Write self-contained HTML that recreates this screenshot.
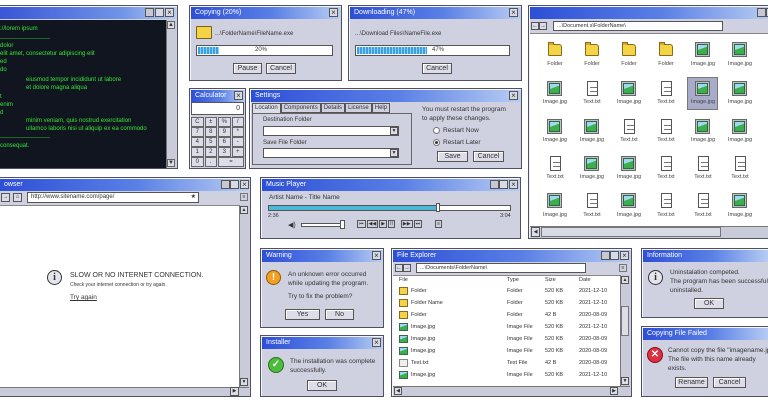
<!DOCTYPE html>
<html><head><meta charset="utf-8"><style>
*{box-sizing:border-box;margin:0;padding:0}
body{width:768px;height:401px;background:#fff;position:relative;overflow:hidden;font-family:"Liberation Sans",sans-serif;font-size:7px;color:#333}
.a{position:absolute}
.w{position:absolute;background:#cfd1e0;border:1px solid #4e5066;box-shadow:inset 1px 1px #f4f4fa}
.t{position:absolute;left:1px;right:1px;top:1px;height:12px;background:linear-gradient(90deg,#2d4fd6,#5a80e6 55%,#b8cdf3);color:#fff;font-size:7px;line-height:12px;padding-left:4px}
.cb{position:absolute;top:2px;width:9px;height:9px;background:#d8dae6;border:1px solid #555;color:#333;font-size:8px;line-height:7px;text-align:center}
.btn{position:absolute;background:#dcdde8;border:1px solid #555;box-shadow:inset 1px 1px #fff;text-align:center;font-size:7px;line-height:10px;height:11px}
.in{position:absolute;background:#fff;border:1px solid #555}
.g{color:#34e634;position:absolute;font-size:6px;white-space:nowrap;font-family:"Liberation Sans",sans-serif}
.ic{position:absolute;width:16px;height:15px}
.lb{position:absolute;width:36px;text-align:center;font-size:5.5px;color:#444}
.sel{position:absolute;background:#a8acc8;border:1px solid #777}
.row{position:absolute;font-size:5.5px;color:#333;white-space:nowrap}
.k{height:9.5px;background:#dcdde8;border:1px solid #666;text-align:center;line-height:8px;margin-bottom:.5px}
</style></head><body>

<!-- Terminal -->
<div class="w" style="left:-2px;top:5px;width:180px;height:164px;">
 <div class="t" style="background:linear-gradient(90deg,#3856d6,#7095e8 70%,#b8cdf3)"></div>
 <div class="cb" style="left:146px;background:#c8c8d4"></div><div class="cb" style="left:156px"></div><div class="cb" style="left:166px">×</div>
 <div class="a" style="left:1px;top:14px;width:166px;height:148px;background:#111520"></div>
 <div class="a" style="left:167px;top:14px;width:10px;height:148px;background:#c9cbd8;border-left:1px solid #777"></div>
 <div class="a" style="left:168px;top:15px;width:8px;height:8px;background:#dcdde6;border:1px solid #666;font-size:6px;line-height:6px;text-align:center">▲</div>
 <div class="a" style="left:168px;top:153px;width:8px;height:8px;background:#dcdde6;border:1px solid #666;font-size:6px;line-height:6px;text-align:center">▼</div>
</div>
<div class="a" style="left:0;top:20px;width:165px;height:145px;overflow:hidden">
<div class="g" style="left:0;top:6px">://lorem ipsum</div>
<div class="g" style="left:0;top:16px">-------------------------</div>
<div class="g" style="left:0;top:23px">dolor</div>
<div class="g" style="left:0;top:31px">elit amet, consectetur adipiscing elit</div>
<div class="g" style="left:0;top:39px">ed</div>
<div class="g" style="left:0;top:47px">do</div>
<div class="g" style="left:26px;top:57px">eiusmod tempor incididunt ut labore</div>
<div class="g" style="left:26px;top:65px">et dolore magna aliqua</div>
<div class="g" style="left:0;top:74px">t</div>
<div class="g" style="left:0;top:82px">enim</div>
<div class="g" style="left:0;top:90px">d</div>
<div class="g" style="left:26px;top:98px">minim veniam, quis nostrud exercitation</div>
<div class="g" style="left:26px;top:106px">ullamco laboris nisi ut aliquip ex ea commodo</div>
<div class="g" style="left:0;top:115px">-------------------------</div>
<div class="g" style="left:0;top:123px">consequat.</div>
</div>

<!-- Copying -->
<div class="w" style="left:189px;top:5px;width:153px;height:76px;">
 <div class="t">Copying (20%)</div><div class="cb" style="left:139px">×</div>
</div>
<div class="a" style="left:196px;top:26px;width:16px;height:13px;background:#f3d444;border:1px solid #7a6020;border-radius:1px"></div>
<div class="a" style="left:215px;top:31px;font-size:6px">...\FolderName\FileName.exe</div>
<div class="in" style="left:196px;top:45px;width:137px;height:11px"></div>
<div class="a" style="left:198px;top:47px;width:21px;height:7px;background:repeating-linear-gradient(90deg,#3aa0e0 0 2px,#8fd0f4 2px 3px)"></div>
<div class="a" style="left:255px;top:47px;font-size:6px">20%</div>
<div class="btn" style="left:233px;top:63px;width:29px">Pause</div>
<div class="btn" style="left:266px;top:63px;width:30px">Cancel</div>

<!-- Downloading -->
<div class="w" style="left:348px;top:5px;width:174px;height:76px;">
 <div class="t">Downloading (47%)</div><div class="cb" style="left:160px">×</div>
</div>
<div class="a" style="left:355px;top:31px;font-size:6px">...\Download Files\NameFile.exe</div>
<div class="in" style="left:355px;top:45px;width:155px;height:11px"></div>
<div class="a" style="left:357px;top:47px;width:70px;height:7px;background:repeating-linear-gradient(90deg,#3aa0e0 0 2px,#8fd0f4 2px 3px)"></div>
<div class="a" style="left:432px;top:47px;font-size:6px">47%</div>
<div class="btn" style="left:422px;top:63px;width:30px">Cancel</div>

<!-- Calculator -->
<div class="w" style="left:189px;top:88px;width:57px;height:81px;">
 <div class="t">Calculator</div><div class="cb" style="left:44px">×</div>
</div>
<div class="in" style="left:191px;top:102px;width:53px;height:13px;text-align:right;padding-right:3px;font-size:7px;line-height:11px">0</div>
<div class="a" style="left:191px;top:117px;width:53px;font-size:6px">
<div style="display:grid;grid-template-columns:repeat(4,12.5px);gap:0 1px;">
<div class="k">C</div><div class="k">±</div><div class="k">%</div><div class="k">/</div>
<div class="k">7</div><div class="k">8</div><div class="k">9</div><div class="k">*</div>
<div class="k">4</div><div class="k">5</div><div class="k">6</div><div class="k">-</div>
<div class="k">1</div><div class="k">2</div><div class="k">3</div><div class="k">+</div>
<div class="k">0</div><div class="k">.</div><div class="k" style="grid-column:span 2">=</div>
</div></div>

<!-- Settings -->
<div class="w" style="left:249px;top:88px;width:273px;height:81px;">
 <div class="t">Settings</div><div class="cb" style="left:259px">×</div>
</div>
<div class="a" style="left:252px;top:103px;font-size:6px;display:flex">
 <div style="border:1px solid #555;border-bottom:none;padding:1px 2px;background:#dcdde8">Location</div>
 <div style="border:1px solid #555;padding:1px 2px">Components</div>
 <div style="border:1px solid #555;padding:1px 2px">Details</div>
 <div style="border:1px solid #555;padding:1px 2px">License</div>
 <div style="border:1px solid #555;padding:1px 2px">Help</div>
</div>
<div class="a" style="left:252px;top:113px;width:160px;height:52px;border:1px solid #666"></div>
<div class="a" style="left:263px;top:117px;font-size:6px">Destination Folder</div>
<div class="in" style="left:263px;top:126px;width:136px;height:10px"></div>
<div class="a" style="left:390px;top:127px;width:8px;height:8px;background:#dcdde8;border:1px solid #555;font-size:5px;text-align:center;line-height:7px">▼</div>
<div class="a" style="left:263px;top:140px;font-size:6px">Save File Folder</div>
<div class="in" style="left:263px;top:148px;width:136px;height:10px"></div>
<div class="a" style="left:390px;top:149px;width:8px;height:8px;background:#dcdde8;border:1px solid #555;font-size:5px;text-align:center;line-height:7px">▼</div>
<div class="a" style="left:422px;top:105px;font-size:6.5px;line-height:9px">You must restart the program<br>to apply these changes.</div>
<div class="a" style="left:433px;top:127px;width:7px;height:7px;border-radius:50%;background:#fff;border:1px solid #777"></div>
<div class="a" style="left:443px;top:127px;font-size:6.5px">Restart Now</div>
<div class="a" style="left:433px;top:139px;width:7px;height:7px;border-radius:50%;background:#fff;border:1px solid #777"><div style="width:3px;height:3px;background:#333;border-radius:50%;margin:1px"></div></div>
<div class="a" style="left:443px;top:139px;font-size:6.5px">Restart Later</div>
<div class="btn" style="left:437px;top:151px;width:31px">Save</div>
<div class="btn" style="left:473px;top:151px;width:31px">Cancel</div>

<!-- Folder window -->
<div class="w" style="left:528px;top:5px;width:245px;height:234px;">
 <div class="t"></div>
 <div class="cb" style="left:228px;background:#c8c8d4"></div><div class="cb" style="left:237px"></div>
 <div class="a" style="left:2px;top:16px;width:8px;height:8px;background:#dcdde8;border:1px solid #555;font-size:6px;line-height:6px;text-align:center">←</div>
 <div class="a" style="left:10px;top:16px;width:8px;height:8px;background:#dcdde8;border:1px solid #555;font-size:6px;line-height:6px;text-align:center">→</div>
 <div class="in" style="left:24px;top:15px;width:170px;height:10px;font-size:5.5px;line-height:8px;padding-left:3px">...\Document.s\FolderName\</div>
 <div class="a" style="left:1px;top:27px;width:243px;height:193px;background:#fff;border-top:1px solid #888"></div>
 <div class="a" style="left:1px;top:220px;width:243px;height:12px;background:#c9cbd8;border-top:1px solid #777"></div>
 <div class="a" style="left:2px;top:221px;width:9px;height:10px;background:#dcdde6;border:1px solid #555;font-size:5px;line-height:8px;text-align:center">◀</div>
 <div class="a" style="left:12px;top:221px;width:180px;height:10px;background:#d8dae4;border:1px solid #777"></div>
</div>
<div class="sel" style="left:687px;top:77px;width:31px;height:33px"></div>
<div id="grid"></div>

<!-- Browser -->
<div class="w" style="left:-2px;top:177px;width:253px;height:220px;">
 <div class="t">owser</div>
 <div class="cb" style="left:222px;background:#c8c8d4"></div><div class="cb" style="left:231px"></div><div class="cb" style="left:241px">×</div>
 <div class="a" style="left:2px;top:15px;width:9px;height:9px;background:#dcdde8;border:1px solid #555;font-size:6px;line-height:7px;text-align:center">→</div>
 <div class="a" style="left:14px;top:15px;width:9px;height:9px;background:#dcdde8;border:1px solid #555;font-size:6px;line-height:7px;text-align:center">⌂</div>
 <div class="in" style="left:28px;top:14px;width:172px;height:11px;font-size:6px;line-height:9px;padding-left:3px">http://www.sitename.com/page/<span style="position:absolute;right:2px;top:0">★</span></div>
 <div class="a" style="left:241px;top:15px;width:8px;height:8px;border:1px solid #777;font-size:5px;line-height:6px;text-align:center">≡</div>
 <div class="a" style="left:1px;top:27px;width:241px;height:182px;background:#fff;border-top:1px solid #888"></div>
 <div class="a" style="left:240px;top:27px;width:10px;height:182px;background:#c9cbd8;border-left:1px solid #777"></div>
 <div class="a" style="left:241px;top:28px;width:8px;height:8px;background:#dcdde6;border:1px solid #555;font-size:5px;line-height:6px;text-align:center">▲</div>
 <div class="a" style="left:241px;top:200px;width:8px;height:8px;background:#dcdde6;border:1px solid #555;font-size:5px;line-height:6px;text-align:center">▼</div>
 <div class="a" style="left:1px;top:209px;width:249px;height:9px;background:#c9cbd8;border-top:1px solid #777"></div>
 <div class="a" style="left:231px;top:209px;width:9px;height:9px;background:#dcdde6;border:1px solid #555;font-size:5px;line-height:7px;text-align:center">▶</div>
</div>
<div class="a" style="left:47px;top:270px;width:15px;height:15px;border-radius:50%;background:#e4e4ec;border:1px solid #333;text-align:center;font:bold 10px/13px 'Liberation Serif',serif">i</div>
<div class="a" style="left:70px;top:272px;font-size:7px;white-space:nowrap">SLOW OR NO INTERNET CONNECTION.</div>
<div class="a" style="left:70px;top:282px;font-size:5px;white-space:nowrap">Check your internet connection or try again.</div>
<div class="a" style="left:70px;top:294px;font-size:6.5px;text-decoration:underline">Try again</div>

<!-- Music player -->
<div class="w" style="left:260px;top:177px;width:261px;height:62px;">
 <div class="t">Music Player</div>
 <div class="cb" style="left:229px;background:#c8c8d4"></div><div class="cb" style="left:238px"></div><div class="cb" style="left:248px">×</div>
</div>
<div class="a" style="left:269px;top:194px;font-size:6.5px">Artist Name - Title Name</div>
<div class="in" style="left:268px;top:205px;width:243px;height:6px;"></div>
<div class="a" style="left:269px;top:206px;width:168px;height:4px;background:#4cb8d8"></div>
<div class="a" style="left:436px;top:203px;width:4px;height:9px;background:#fff;border:1px solid #555"></div>
<div class="a" style="left:268px;top:213px;font-size:5.5px">2:36</div>
<div class="a" style="left:500px;top:213px;font-size:5.5px">3:04</div>
<div class="a" style="left:288px;top:221px;font-size:7px">◀)</div>
<div class="a" style="left:301px;top:223px;width:43px;height:4px;background:#fff;border:1px solid #555"></div>
<div class="a" style="left:340px;top:220px;width:5px;height:9px;background:#fff;border:1px solid #555"></div>
<div class="a" style="left:357px;top:220px;font-size:5px;display:flex;gap:1px">
 <span style="border:1px solid #555;padding:0 1px">⏮</span><span style="border:1px solid #555;padding:0 1px">◀◀</span><span style="border:1px solid #555;padding:0 1px">▶</span><span style="border:1px solid #555;padding:0 1px">II</span><span style="margin-left:5px;border:1px solid #555;padding:0 1px">▶▶</span><span style="border:1px solid #555;padding:0 1px">⏭</span><span style="margin-left:12px;border:1px solid #555;padding:0 1px">≡</span>
</div>

<!-- Warning -->
<div class="w" style="left:260px;top:248px;width:124px;height:80px;">
 <div class="t">Warning</div><div class="cb" style="left:111px">×</div>
</div>
<div class="a" style="left:266px;top:270px;width:15px;height:15px;border-radius:50%;background:#f2a020;border:1px solid #8a5a10;color:#fff;text-align:center;font:bold 10px/13px sans-serif">!</div>
<div class="a" style="left:288px;top:270px;font-size:6.5px;line-height:9px">An unknown error occurred<br>while updating the program.</div>
<div class="a" style="left:288px;top:293px;font-size:6.5px">Try to fix the problem?</div>
<div class="btn" style="left:285px;top:309px;width:35px">Yes</div>
<div class="btn" style="left:325px;top:309px;width:29px">No</div>

<!-- Installer -->
<div class="w" style="left:260px;top:335px;width:124px;height:62px;">
 <div class="t">Installer</div><div class="cb" style="left:111px">×</div>
</div>
<div class="a" style="left:268px;top:357px;width:16px;height:16px;border-radius:50%;background:#4cbc3c;border:1px solid #2a7020;color:#fff;text-align:center;font:bold 10px/14px sans-serif">✓</div>
<div class="a" style="left:290px;top:357px;font-size:6.5px;line-height:9px">The installation was complete<br>successfully.</div>
<div class="btn" style="left:307px;top:380px;width:30px">OK</div>

<!-- File Explorer -->
<div class="w" style="left:391px;top:248px;width:241px;height:149px;">
 <div class="t">File Explorer</div>
 <div class="cb" style="left:209px;background:#c8c8d4"></div><div class="cb" style="left:218px"></div><div class="cb" style="left:228px">×</div>
 <div class="a" style="left:3px;top:15px;width:8px;height:8px;background:#dcdde8;border:1px solid #555;font-size:6px;line-height:6px;text-align:center">←</div>
 <div class="a" style="left:11px;top:15px;width:8px;height:8px;background:#dcdde8;border:1px solid #555;font-size:6px;line-height:6px;text-align:center">→</div>
 <div class="in" style="left:24px;top:14px;width:170px;height:10px;font-size:5.5px;line-height:8px;padding-left:3px">...\Documents\FolderName\</div>
 <div class="a" style="left:227px;top:15px;width:8px;height:8px;border:1px solid #777;font-size:5px;line-height:6px;text-align:center">≡</div>
 <div class="a" style="left:1px;top:26px;width:237px;height:111px;background:#fff;border-top:1px solid #888"></div>
 <div class="a" style="left:228px;top:26px;width:10px;height:111px;background:#c9cbd8;border-left:1px solid #777"></div>
 <div class="a" style="left:229px;top:27px;width:8px;height:8px;background:#dcdde6;border:1px solid #555;font-size:5px;line-height:6px;text-align:center">▲</div>
 <div class="a" style="left:229px;top:57px;width:8px;height:30px;background:#dcdde6;border:1px solid #777"></div>
 <div class="a" style="left:229px;top:128px;width:8px;height:8px;background:#dcdde6;border:1px solid #555;font-size:5px;line-height:6px;text-align:center">▼</div>
 <div class="a" style="left:1px;top:137px;width:237px;height:10px;background:#c9cbd8;border-top:1px solid #777"></div>
 <div class="a" style="left:2px;top:138px;width:8px;height:8px;background:#dcdde6;border:1px solid #555;font-size:5px;line-height:6px;text-align:center">◀</div>
 <div class="a" style="left:218px;top:138px;width:8px;height:8px;background:#dcdde6;border:1px solid #555;font-size:5px;line-height:6px;text-align:center">▶</div>
</div>
<div id="rows"></div>

<!-- Information -->
<div class="w" style="left:641px;top:248px;width:130px;height:70px;">
 <div class="t">Information</div>
</div>
<div class="a" style="left:648px;top:270px;width:15px;height:15px;border-radius:50%;background:#e4e4ec;border:1px solid #333;text-align:center;font:bold 10px/13px 'Liberation Serif',serif">i</div>
<div class="a" style="left:670px;top:268px;font-size:6.5px;line-height:9px;white-space:nowrap">Uninstalation competed.<br>The program has been successfully<br>uninstalled.</div>
<div class="btn" style="left:694px;top:298px;width:30px">OK</div>

<!-- Copy failed -->
<div class="w" style="left:641px;top:326px;width:130px;height:71px;">
 <div class="t">Copying File Failed</div>
</div>
<div class="a" style="left:647px;top:347px;width:16px;height:16px;border-radius:50%;background:#e03040;border:1px solid #801020;color:#fff;text-align:center;font:bold 10px/14px sans-serif">✕</div>
<div class="a" style="left:668px;top:346px;font-size:6.5px;line-height:9px;white-space:nowrap">Cannot copy the file "imagename.jpg".<br>The file with this name already<br>exists.</div>
<div class="btn" style="left:675px;top:377px;width:33px">Rename</div>
<div class="btn" style="left:713px;top:377px;width:33px">Cancel</div>

<script>
var F='<div style="position:absolute;left:1px;top:2px;width:14px;height:12px;background:#f3d444;border:1px solid #8a6a20;border-radius:1px 3px 1px 1px"></div><div style="position:absolute;left:1px;top:0;width:6px;height:3px;background:#e0a828;border:1px solid #8a6a20;border-bottom:none"></div>';
var I='<div style="position:absolute;left:0;top:0;width:15px;height:15px;background:#bcc0cc;border:1px solid #666"></div><div style="position:absolute;left:2px;top:2px;width:11px;height:11px;background:linear-gradient(160deg,#9fd8f0 40%,#3cae4c 41%);border:1px solid #2c6a3a"></div>';
var T='<div style="position:absolute;left:3px;top:0;width:11px;height:15px;background:#fff repeating-linear-gradient(180deg,transparent 0 3px,#777 3px 4px) 2px 2px/7px 10px no-repeat;border:1px solid #555"></div>';
var m={F:[F,'Folder'],I:[I,'Image.jpg'],T:[T,'Text.txt']};
var g=['FFFFII','ITITII','IITTII','TIITTT','ITITTI'];
var xs=[555,592,629,666,703,740],iy=[42,81,119,156,193],ly=[61,99,137,174,212],h='';
g.forEach(function(r,ri){for(var c=0;c<6;c++){var k=m[r[c]];h+='<div class="ic" style="left:'+(xs[c]-8)+'px;top:'+iy[ri]+'px">'+k[0]+'</div><div class="lb" style="left:'+(xs[c]-18)+'px;top:'+ly[ri]+'px">'+k[1]+'</div>';}});
document.getElementById('grid').innerHTML=h;
var R=[['F','Folder','Folder','520 KB','2021-12-10'],['F','Folder Name','Folder','520 KB','2021-12-10'],['F','Folder','Folder','42 B','2020-08-09'],['I','Image.jpg','Image File','520 KB','2021-12-10'],['I','Image.jpg','Image File','520 KB','2020-08-09'],['I','Image.jpg','Image File','520 KB','2020-08-09'],['T','Text.txt','Text File','42 B','2020-08-09'],['I','Image.jpg','Image File','520 KB','2021-12-10']];
var s='<div class="row" style="left:399px;top:277px">File</div><div class="row" style="left:507px;top:277px">Type</div><div class="row" style="left:545px;top:277px">Size</div><div class="row" style="left:579px;top:277px">Date</div>';
R.forEach(function(r,i){var y=288+i*12;var col=r[0]=='F'?'background:#f3d444;border:1px solid #8a6a20':r[0]=='I'?'background:linear-gradient(160deg,#9fd8f0 40%,#3cae4c 41%);border:1px solid #3a6a4a':'background:#eee;border:1px solid #888';
s+='<div class="a" style="left:399px;top:'+(y-1)+'px;width:9px;height:8px;'+col+'"></div><div class="row" style="left:411px;top:'+y+'px">'+r[1]+'</div><div class="row" style="left:507px;top:'+y+'px">'+r[2]+'</div><div class="row" style="left:545px;top:'+y+'px">'+r[3]+'</div><div class="row" style="left:579px;top:'+y+'px">'+r[4]+'</div>';});
document.getElementById('rows').innerHTML=s;
</script>
</body></html>
